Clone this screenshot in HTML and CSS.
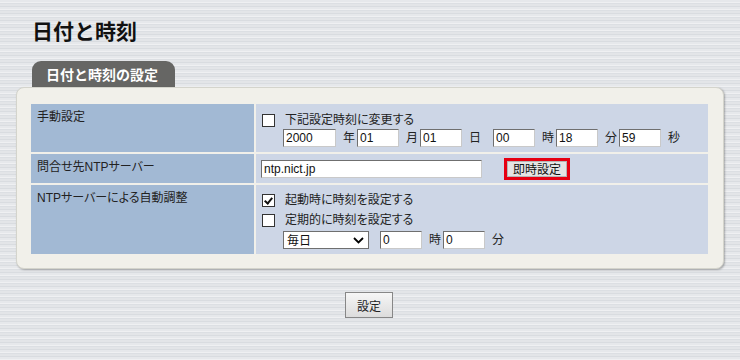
FILE: index.html
```html
<!DOCTYPE html>
<html lang="ja">
<head>
<meta charset="utf-8">
<title>日付と時刻</title>
<link rel="stylesheet" href="styles.css">
</head>
<body>
<h1 class="page-title">日付と時刻</h1>
<section class="section">
  <div class="tab">日付と時刻の設定</div>
  <div class="panel">
    <div class="grid">
      <div class="label">手動設定</div>
      <div class="value row-manual">
        <div class="line check-line">
          <input type="checkbox" class="cb">
          <span class="cb-text">下記設定時刻に変更する</span>
        </div>
        <div class="line inputs-line">
          <input class="field year" type="text" value="2000"><span class="unit">年</span>
          <input class="field num" type="text" value="01"><span class="unit">月</span>
          <input class="field num" type="text" value="01"><span class="unit unit-wide">日</span>
          <input class="field num" type="text" value="00"><span class="unit">時</span>
          <input class="field num" type="text" value="18"><span class="unit">分</span>
          <input class="field num" type="text" value="59"><span class="unit">秒</span>
        </div>
      </div>

      <div class="label">問合せ先NTPサーバー</div>
      <div class="value row-ntp">
        <input class="field server" type="text" value="ntp.nict.jp">
        <button class="btn-now" type="button">即時設定</button>
      </div>

      <div class="label">NTPサーバーによる自動調整</div>
      <div class="value row-auto">
        <div class="line auto-line">
          <input type="checkbox" class="cb" checked>
          <span class="cb-text">起動時に時刻を設定する</span>
        </div>
        <div class="line auto-line">
          <input type="checkbox" class="cb">
          <span class="cb-text">定期的に時刻を設定する</span>
        </div>
        <div class="line auto-inputs">
          <span class="select-wrap">
            <select class="select"><option>毎日</option></select>
            <svg class="chev" width="11" height="7" viewBox="0 0 11 7"><path d="M1 1 L5.5 5.5 L10 1" fill="none" stroke="#000" stroke-width="1.8"/></svg>
          </span>
          <input class="field num gap-left" type="text" value="0"><span class="unit">時</span>
          <input class="field num" type="text" value="0"><span class="unit">分</span>
        </div>
      </div>
    </div>
  </div>
</section>
<div class="actions">
  <button class="btn-submit" type="button">設定</button>
</div>
</body>
</html>
```

FILE: styles.css
```css
html, body {
  margin: 0;
  padding: 0;
}
body {
  width: 740px;
  height: 360px;
  overflow: hidden;
  font-family: "Liberation Sans", "Noto Sans CJK JP", sans-serif;
  color: #222;
  background-color: #e4e6e9;
  background-image: repeating-linear-gradient(180deg,
    #e6e8eb 0px, #e6e8eb 2px,
    #eff0f2 2px, #eff0f2 3px,
    #dcdfe3 3px, #dcdfe3 4px,
    #e3e5e8 4px, #e3e5e8 6px,
    #d9dce0 6px, #d9dce0 7px);
}
.page-title {
  margin: 0;
  padding: 18px 0 0 32px;
  font-size: 21px;
  line-height: 25px;
  font-weight: bold;
  color: #111;
  font-family: "Noto Sans CJK JP", sans-serif;
}
.section {
  margin: 18px 16px 0 16px;
}
.tab {
  margin-left: 16px;
  width: 143px;
  height: 26px;
  box-sizing: border-box;
  padding-left: 14px;
  background: #666664;
  border-radius: 9px 9px 0 0;
  color: #fff;
  font-family: "Noto Sans CJK JP", sans-serif;
  font-size: 14px;
  font-weight: bold;
  line-height: 27px;
}
.panel {
  width: 708px;
  box-sizing: border-box;
  padding: 16px 15px 14px 14px;
  background: #f1f0ea;
  border: 1px solid #d4d4cc;
  border-radius: 8px;
  box-shadow: 1px 1px 2px rgba(0,0,0,0.28);
}
.grid {
  display: grid;
  grid-template-columns: 223px 1fr;
  gap: 2px;
  font-size: 12px;
  font-feature-settings: "palt";
}
.label {
  background: #a2b9d4;
  padding: 4px 6px 0 6px;
  line-height: 18px;
  color: #222;
}
.value {
  background: #cdd6e6;
}
.line {
  display: flex;
  align-items: center;
}
.row-manual {
  padding: 7px 6px 5px 6px;
}
.check-line {
  height: 18px;
}
.inputs-line {
  height: 18px;
  padding-left: 21px;
}
.row-ntp {
  display: flex;
  align-items: center;
  height: 29px;
  padding: 1px 5px 0 5px;
  box-sizing: border-box;
}
.row-auto {
  padding: 5px 6px 5px 6px;
}
.auto-line {
  height: 20px;
}
.auto-inputs {
  height: 19px;
  padding-left: 21px;
}
.cb {
  appearance: none;
  -webkit-appearance: none;
  margin: 0;
  width: 13px;
  height: 13px;
  box-sizing: border-box;
  border: 1px solid #333;
  background: #fff;
  position: relative;
  flex: none;
}
.cb:checked::after {
  content: "";
  position: absolute;
  left: 3px;
  top: 1px;
  width: 3px;
  height: 6px;
  border-right: 2px solid #111;
  border-bottom: 2px solid #111;
  transform: rotate(40deg);
}
.cb-text {
  margin-left: 10px;
  line-height: 18px;
}
.field {
  box-sizing: border-box;
  height: 18px;
  margin: 0;
  padding: 0 2px;
  font-family: "Liberation Sans", sans-serif;
  font-size: 12px;
  color: #111;
  background: #fff;
  border: 1px solid;
  border-color: #6f6f6f #c9c9c9 #c9c9c9 #6f6f6f;
  outline: none;
}
.year { width: 53px; }
.num { width: 42px; }
.server { width: 221px; }
.unit {
  margin: 0 2px 0 7px;
  line-height: 18px;
}
.unit-wide {
  margin-right: 12px;
}
.gap-left {
  margin-left: 11px;
}
.select-wrap {
  position: relative;
  display: inline-block;
  width: 86px;
  height: 18px;
}
.select {
  appearance: none;
  -webkit-appearance: none;
  width: 86px;
  height: 18px;
  box-sizing: border-box;
  margin: 0;
  padding: 0 0 0 3px;
  border: 1px solid #6f6f6f;
  border-radius: 0;
  background: #fff;
  font-family: "Noto Sans CJK JP", sans-serif;
  font-size: 12px;
  line-height: 16px;
  color: #111;
}
.chev {
  position: absolute;
  right: 5px;
  top: 6px;
  pointer-events: none;
}
.btn-now {
  margin: 0 0 0 25px;
  width: 60px;
  height: 16px;
  padding: 0;
  box-sizing: border-box;
  border: 1px solid #b5b5b5;
  background: #e4e4e4;
  outline: 3px solid #e60012;
  font-family: "Noto Sans CJK JP", sans-serif;
  font-size: 12px;
  line-height: 14px;
  color: #111;
}
.actions {
  display: flex;
  justify-content: center;
  padding-top: 23px;
}
.btn-submit {
  width: 48px;
  height: 26px;
  padding: 0;
  margin: 0 0 0 -2px;
  box-sizing: border-box;
  border: 1px solid #878787;
  background: linear-gradient(#f6f6f6, #dcdcdc);
  font-family: "Noto Sans CJK JP", sans-serif;
  font-size: 12px;
  color: #222;
}
```
